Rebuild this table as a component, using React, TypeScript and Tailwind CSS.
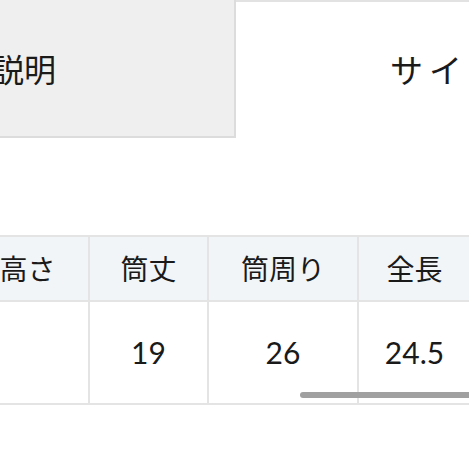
export default function App() {
  const heads = ["高さ", "筒丈", "筒周り", "全長", "幅"]
  const vals = ["", "19", "26", "24.5", "10"]
  const widths = ["w-[123px]", "w-[119px]", "w-[150px]", "w-[113px]", "w-[120px]"]

  return (
    <div className="relative w-[469px] h-[469px] overflow-hidden bg-white text-[#1a1a1a] font-['Lato','Noto_Sans_CJK_JP',sans-serif]">
      {/* tabs */}
      <div className="flex h-[138px]">
        <div className="w-[236px] shrink-0 bg-[#efefef] border-r-2 border-b-2 border-[#dcdcdc] overflow-hidden flex items-center">
          <span className="ml-[-72px] whitespace-nowrap text-[32px] font-['Noto_Sans_CJK_JP',sans-serif]">商品説明</span>
        </div>
        <div className="flex-1 border-t-2 border-[#e2e2e2] overflow-hidden flex items-center pl-[154px]">
          <span className="whitespace-nowrap text-[33px] tracking-[6px] font-['Noto_Sans_CJK_JP',sans-serif]">サイズ表</span>
        </div>
      </div>

      {/* size table */}
      <div className="mt-[97px] ml-[-33px] w-max border-t-2 border-b-2 border-[#e4e4e4]">
        <div className="flex bg-[#f1f5f7] border-b-2 border-[#e4e4e4]">
          {heads.map((h, i) => (
            <div key={h} className={`${widths[i]} h-[63px] border-r-2 border-[#e4e4e4] flex items-center justify-center text-[28px]`}>
              {h}
            </div>
          ))}
        </div>
        <div className="flex">
          {vals.map((v, i) => (
            <div key={i} className={`${widths[i]} h-[101px] border-r-2 border-[#e4e4e4] flex items-center justify-center text-[30px]`}>
              {v}
            </div>
          ))}
        </div>
      </div>

      {/* scroll indicator */}
      <div className="absolute left-[300px] top-[392px] w-[180px] h-[6px] rounded-full bg-[#a0a0a0]" />
    </div>
  )
}
